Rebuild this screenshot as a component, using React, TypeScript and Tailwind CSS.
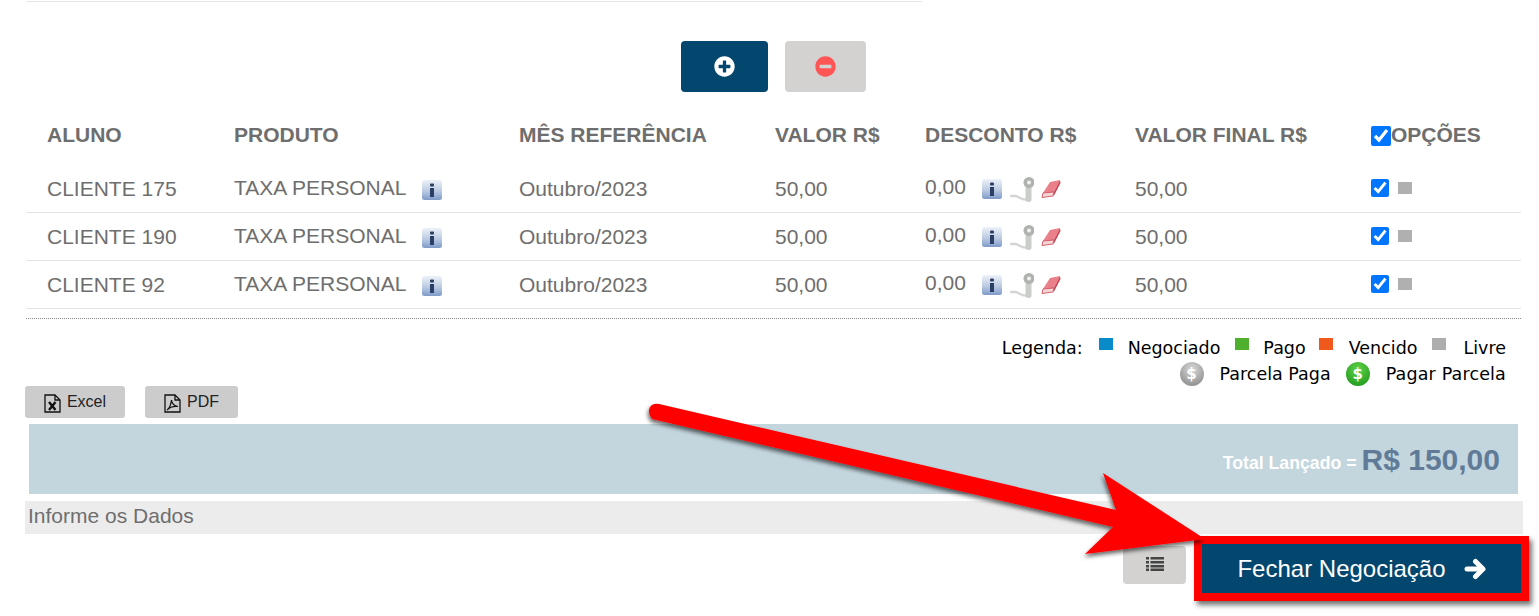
import { FaPlusCircle, FaMinusCircle } from 'react-icons/fa';

const ROWS = ['CLIENTE 175', 'CLIENTE 190', 'CLIENTE 92'];
const COLS = 'grid grid-cols-[187px_285px_256px_150px_210px_236px_171px]';

function InfoIcon() {
  return (
    <svg width="20" height="20" viewBox="0 0 20 20" className="shrink-0">
      <defs>
        <linearGradient id="infoBg" x1="0" y1="0" x2="0" y2="1">
          <stop offset="0" stopColor="#eef2f8" />
          <stop offset="0.55" stopColor="#bccbe2" />
          <stop offset="1" stopColor="#7f9bc8" />
        </linearGradient>
      </defs>
      <rect x="0" y="0" width="20" height="20" rx="2.500" fill="url(#infoBg)" />
      <rect x="8" y="3.500" width="4" height="3" rx="1" fill="#2a3f66" />
      <rect x="8" y="8" width="4" height="9" fill="#2a3f66" />
    </svg>
  );
}

function PinIcon() {
  return (
    <svg width="24" height="26" viewBox="0 0 24 26" className="shrink-0">
      <path d="M0 20h5c4 0 7 5 11 3" fill="none" stroke="#d4d6d4" strokeWidth="2.500" />
      <rect x="15.500" y="10" width="6" height="16" rx="2.500" fill="#cbcdcb" />
      <circle cx="19" cy="6.500" r="5.500" fill="#b0b2b0" />
      <circle cx="19" cy="6.500" r="2" fill="#f1f1f1" />
    </svg>
  );
}

function EraserIcon() {
  return (
    <svg width="20" height="18" viewBox="0 0 20 18" className="shrink-0">
      <path d="M9 2L19 0L13 12L2 13Z" fill="#ea8089" />
      <path d="M2 13L13 12L12 16L1 17.500Z" fill="#f4d6d8" stroke="#c94050" strokeWidth="0.800" />
      <path d="M13 12L19 0L19.500 3L12.500 16.500Z" fill="#c94050" />
    </svg>
  );
}

function ExcelIcon() {
  return (
    <svg width="17" height="19" viewBox="0 0 17 19" className="shrink-0">
      <path d="M1 1h10l5 5v12H1z" fill="none" stroke="#111" strokeWidth="1.300" />
      <path d="M11 1v5h5" fill="none" stroke="#111" strokeWidth="1.300" />
      <path d="M5 8l6.500 8M11.500 8L5 16" stroke="#111" strokeWidth="2.400" />
    </svg>
  );
}

function PdfIcon() {
  return (
    <svg width="17" height="19" viewBox="0 0 17 19" className="shrink-0">
      <path d="M1 1h10l5 5v12H1z" fill="none" stroke="#111" strokeWidth="1.300" />
      <path d="M11 1v5h5" fill="none" stroke="#111" strokeWidth="1.300" />
      <path d="M3 16c3-2 4-6 4.500-10c.5 4 3 6 6.500 6.500c-4-.5-8 .5-11 3.500" fill="none" stroke="#111" strokeWidth="1.200" />
    </svg>
  );
}

function ListIcon() {
  return (
    <svg width="18" height="14" viewBox="0 0 18 14" fill="#444">
      {[0, 4, 8, 11.500].map((y) => (
        <g key={y}>
          <rect x="0" y={y} width="3" height="2.500" />
          <rect x="4.500" y={y} width="13.500" height="2.500" />
        </g>
      ))}
    </svg>
  );
}

function ArrowIcon() {
  return (
    <svg width="22" height="22" viewBox="0 0 22 22" fill="none" stroke="#fff" strokeWidth="5" strokeLinecap="round" strokeLinejoin="round">
      <path d="M3 11H18" />
      <path d="M11.500 3.500L19 11L11.500 18.500" />
    </svg>
  );
}

function DollarCoin({ from, to }: { from: string; to: string }) {
  return (
    <span
      className="flex h-6 w-6 items-center justify-center rounded-full text-[15px] font-bold text-white"
      style={{ background: `radial-gradient(circle at 50% 30%, ${from}, ${to})` }}
    >
      $
    </span>
  );
}

function LegendItem({ color, label, gap }: { color: string; label: string; gap: string }) {
  return (
    <span className="flex items-start">
      <span className={`mt-[3px] h-3 w-3.5 ${color}`} />
      <span className={gap}>{label}</span>
    </span>
  );
}

export default function App() {
  return (
    <div className="relative h-[616px] overflow-hidden bg-white font-['Liberation_Sans',Arial,sans-serif] text-[#6e6e6e]">
      <div className="ml-[26px] mt-px w-[896px] border-t border-[#e6e6e6]" />

      <div className="mt-[39px] flex justify-center gap-[17px] pl-[7px]">
        <button className="flex h-[51px] w-[87px] items-center justify-center rounded bg-[#03466e]">
          <FaPlusCircle className="text-[21px] text-white" />
        </button>
        <button className="flex h-[51px] w-[81px] items-center justify-center rounded bg-[#d3d2d1]">
          <FaMinusCircle className="text-[21px] text-[#ff5555]" />
        </button>
      </div>

      <div className="ml-[26px] mt-[19px] w-[1495px]">
        <div className={`${COLS} h-[54px] items-start pt-[11px] text-[21px] font-bold leading-[26px]`}>
          <div className="pl-[21px]">ALUNO</div>
          <div className="pl-[21px]">PRODUTO</div>
          <div className="pl-[21px]">MÊS REFERÊNCIA</div>
          <div className="pl-[21px]">VALOR R$</div>
          <div className="pl-[21px]">DESCONTO R$</div>
          <div className="pl-[21px]">VALOR FINAL R$</div>
          <div className="flex items-center pl-[21px]">
            <input type="checkbox" defaultChecked className="mt-[2px] h-5 w-5" />
            OPÇÕES
          </div>
        </div>
        {ROWS.map((name) => (
          <div key={name} className={`${COLS} h-12 items-center border-b border-[#e0e6e6] text-[21px]`}>
            <div className="pl-[21px] pt-[1px]">{name}</div>
            <div className="flex items-center pl-[21px]">
              <span className="-mt-[2px]">TAXA PERSONAL</span>
              <span className="ml-4 mt-[2px]"><InfoIcon /></span>
            </div>
            <div className="pl-[21px] pt-[1px]">Outubro/2023</div>
            <div className="pl-[21px] pt-[1px]">50,00</div>
            <div className="flex items-center pl-[21px]">
              <span className="-mt-[3px]">0,00</span>
              <span className="ml-[16px] mt-[1px]"><InfoIcon /></span>
              <span className="ml-[8px]"><PinIcon /></span>
              <span className="ml-[7px]"><EraserIcon /></span>
            </div>
            <div className="pl-[21px] pt-[1px]">50,00</div>
            <div className="flex items-center pl-[21px]">
              <input type="checkbox" defaultChecked className="-mt-[2px] h-[18px] w-[18px]" />
              <span className="-mt-[2px] ml-[9px] h-3 w-3.5 bg-[#b0b0b0]" />
            </div>
          </div>
        ))}
        <div className="mt-[9px] border-t border-dotted border-[#8a8a8a]" />
      </div>

      <div className="mr-[33px] mt-[16px] flex flex-col items-end font-['DejaVu_Sans',sans-serif] text-[17.5px] leading-[26px] text-black">
        <div className="flex">
          <span className="mr-[16px]">Legenda:</span>
          <span className="mr-[15px]"><LegendItem color="bg-[#0a8bc9]" label="Negociado" gap="ml-[15px]" /></span>
          <span className="mr-[13px]"><LegendItem color="bg-[#4fb030]" label="Pago" gap="ml-[14px]" /></span>
          <span className="mr-[15px]"><LegendItem color="bg-[#f0581e]" label="Vencido" gap="ml-[16px]" /></span>
          <LegendItem color="bg-[#adadad]" label="Livre" gap="ml-[17px]" />
        </div>
        <div className="flex items-center">
          <DollarCoin from="#d8d8d8" to="#808080" />
          <span className="ml-4">Parcela Paga</span>
          <span className="ml-[15px]"><DollarCoin from="#62d34a" to="#159015" /></span>
          <span className="ml-4 tracking-[0.15px]">Pagar Parcela</span>
        </div>
      </div>

      <div className="ml-[25px] -mt-[1px] flex gap-5 text-[16px] text-[#222]">
        <button className="flex h-8 w-[100px] items-center justify-center gap-[6px] rounded-[3px] bg-[#cccccc]">
          <span className="mt-[3px]"><ExcelIcon /></span>
          <span className="-mt-[1px]">Excel</span>
        </button>
        <button className="flex h-8 w-[93px] items-center justify-center gap-[6px] rounded-[3px] bg-[#cccccc]">
          <span className="mt-[3px]"><PdfIcon /></span>
          <span className="-mt-[1px]">PDF</span>
        </button>
      </div>

      <div className="ml-[29px] mt-1.5 flex h-[70px] w-[1489px] items-center justify-end bg-[#c3d5dd] pr-[18px] font-bold">
        <span className="mt-[9px] text-[17.7px] text-white">Total Lançado =</span>
        <span className="ml-[5px] text-[30px] text-[#5f7b98]">R$ 150,00</span>
      </div>

      <div className="ml-[25px] mt-[7px] flex h-[33px] w-[1498px] items-center bg-[#ececec] pb-1 pl-[3px] text-[21px]">
        Informe os Dados
      </div>

      <div className="mr-[10px] mt-[2px] flex items-start justify-end gap-2">
        <button className="mt-[10px] flex h-[38px] w-[63px] items-center justify-center rounded bg-[#d3d2d1] pb-[2px]">
          <ListIcon />
        </button>
        <button className="flex h-[65px] w-[335px] items-center justify-center gap-[18px] border-8 border-[#ff0000] bg-[#03466e] text-[24px] text-white shadow-[3px_4px_5px_rgba(0,0,0,0.55)]">
          Fechar Negociação
          <ArrowIcon />
        </button>
      </div>

      {/* seta de destaque */}
      <svg className="pointer-events-none absolute inset-0" width="1539" height="616" viewBox="0 0 1539 616">
        <defs>
          <filter id="arrowShadow" x="-5%" y="-20%" width="110%" height="140%">
            <feDropShadow dx="-1" dy="3" stdDeviation="2" floodColor="#000" floodOpacity="0.6" />
          </filter>
        </defs>
        <path
          d="M659 404 L1116 510 L1103 473 L1205 539 L1085 554 L1113 527 L652 419 Q647 412 650 407 Q653 403 659 404 Z"
          fill="#ff0000"
          filter="url(#arrowShadow)"
        />
      </svg>
    </div>
  );
}
